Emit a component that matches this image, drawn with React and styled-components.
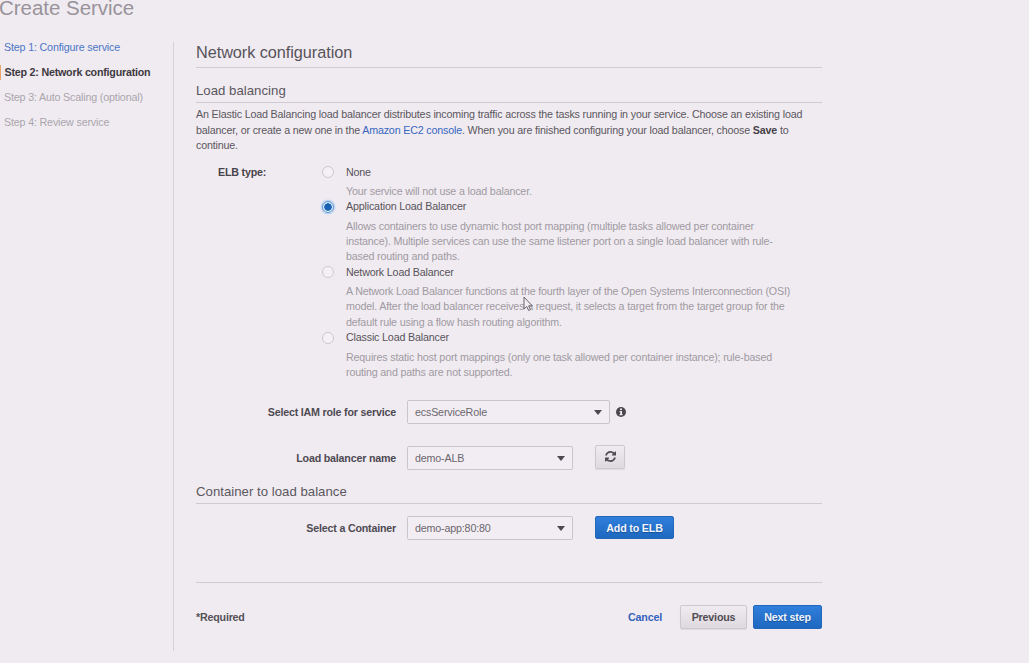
import React from "react";
import styled, { createGlobalStyle, css } from "styled-components";

const GlobalStyle = createGlobalStyle`
  * { box-sizing: border-box; }
  body {
    margin: 0;
    background: #f0ebf1;
    color: #5b575e;
    font-family: "Liberation Sans", Arial, sans-serif;
    font-size: 10.7px;
    letter-spacing: -0.165px;
    overflow: hidden;
  }
`;

const Page = styled.div`
  position: relative;
  width: 1029px;
  height: 663px;
  overflow: hidden;
`;

const PageTitle = styled.h1`
  margin: 0 0 0 -1px;
  height: 40px;
  font-size: 20.5px;
  font-weight: 400;
  letter-spacing: -0.03px;
  line-height: 16px;
  color: #98939a;
  white-space: nowrap;
`;

const Body = styled.div`
  display: flex;
  align-items: flex-start;
`;

const Steps = styled.nav`
  width: 173px;
  display: flex;
  flex-direction: column;
  gap: 10px;
`;

const stepColors = { link: "#4b76c6", current: "#3d393f", pending: "#aaa5ac" };

const Step = styled.div`
  height: 15px;
  line-height: 15px;
  padding-left: ${(p) => (p.$state === "current" ? 3.5 : 4)}px;
  border-left: ${(p) => (p.$state === "current" ? "1px solid #e8a768" : "0")};
  font-weight: ${(p) => (p.$state === "current" ? 700 : 400)};
  letter-spacing: ${(p) => (p.$state === "current" ? -0.21 : -0.16)}px;
  color: ${(p) => stepColors[p.$state]};
  white-space: nowrap;
`;

const Divider = styled.div`
  width: 1px;
  height: 609px;
  margin-top: 2px;
  background: #d6d1d8;
`;

const Main = styled.main`
  width: 626px;
  margin-left: 22px;
`;

const Heading = styled.h2`
  margin: 0;
  height: 28px;
  line-height: 24px;
  font-size: 16.3px;
  font-weight: 400;
  letter-spacing: -0.06px;
  color: #57535a;
  border-bottom: 1px solid #d0cbd2;
`;

const SubHeading = styled.h3`
  margin: ${(p) => p.$top}px 0 0;
  height: 22px;
  line-height: 20px;
  font-size: 13.2px;
  font-weight: 400;
  letter-spacing: 0.02px;
  color: #5b575e;
  border-bottom: 1px solid #cfcad1;
`;

const Intro = styled.p`
  margin: 4px 0 0;
  line-height: 15.5px;
  white-space: nowrap;
`;

const Link = styled.a`
  color: #3767bf;
  text-decoration: none;
`;

const Strong = styled.strong`
  color: #454147;
`;

const ElbRow = styled.div`
  display: flex;
  margin-top: 10.5px;
  height: 227px;
`;

const ElbLabel = styled.div`
  width: 126px;
  padding-left: 22px;
  line-height: 16px;
  font-weight: 700;
  letter-spacing: -0.2px;
  color: #48444a;
`;

const Options = styled.div`
  display: flex;
  flex-direction: column;
  margin-top: 0.5px;
`;

const Option = styled.label`
  display: grid;
  grid-template-columns: 12px 1fr;
  column-gap: 12px;
`;

const Radio = styled.span`
  width: 12px;
  height: 12px;
  margin-top: 1.5px;
  border-radius: 50%;
  border: 1px solid #cdc8cf;
  background: #f4f0f5;
  ${(p) =>
    p.$checked &&
    css`
      border-color: #5e9bdb;
      background: radial-gradient(circle, #1b62b6 0 3.4px, #dce8f6 4.1px);
      box-shadow: 0 0 1.5px 1px #a5c9ee;
    `}
`;

const OptionText = styled.div`
  line-height: 14.8px;
  color: #57535a;
  white-space: nowrap;
`;

const Hint = styled.div`
  padding-top: 4.5px;
  line-height: 15.4px;
  color: #9f9aa1;
`;

const FieldRow = styled.div`
  display: flex;
  align-items: center;
  height: 24px;
  margin-top: ${(p) => p.$top}px;
`;

const FieldLabel = styled.div`
  width: 200px;
  margin-right: 11px;
  text-align: right;
  font-weight: 700;
  letter-spacing: -0.2px;
  color: #4e4a51;
`;

const Select = styled.div`
  display: flex;
  align-items: center;
  justify-content: space-between;
  width: ${(p) => p.$width}px;
  height: 24px;
  padding: 0 7px;
  border: 1px solid #cac5cc;
  border-radius: 2px;
  background: #f2edf3;
  color: #6b676e;
`;

const Caret = styled.span`
  border: 4px solid transparent;
  border-top: 5px solid #4c484f;
  border-bottom: 0;
`;

const buttonTones = {
  primary: css`
    border: 1px solid #2367bb;
    background: linear-gradient(#2f7fdc, #1e68bf);
    color: #f1f5fc;
    text-shadow: 0 1px 1px rgba(0, 30, 80, 0.4);
  `,
  plain: css`
    border: 1px solid #cdc8ce;
    background: linear-gradient(#efebf0, #ded9df);
    color: #504c53;
    box-shadow: 0 1px 1px rgba(90, 80, 90, 0.12);
  `,
};

const Button = styled.button`
  display: flex;
  align-items: center;
  justify-content: center;
  width: ${(p) => p.$width}px;
  height: ${(p) => p.$height || 24}px;
  margin: ${(p) => p.$margin || 0};
  padding: 0;
  border-radius: 2px;
  font-family: inherit;
  font-size: 10.7px;
  font-weight: 700;
  letter-spacing: -0.18px;
  white-space: nowrap;
  ${(p) => buttonTones[p.$tone]}
`;

const InfoIcon = styled.svg`
  margin-left: 6px;
`;

const Footer = styled.footer`
  display: flex;
  align-items: center;
  margin-top: 42px;
  height: 69px;
  border-top: 1px solid #d0cbd2;
`;

const Required = styled.span`
  flex: 1;
  font-weight: 700;
  letter-spacing: -0.2px;
  color: #545057;
`;

const Cancel = styled.a`
  margin-right: 18px;
  font-weight: 700;
  letter-spacing: -0.18px;
  color: #3463bd;
`;

const Pointer = styled.svg`
  position: absolute;
  left: 522px;
  top: 295px;
`;

const steps = [
  { text: "Step 1: Configure service", state: "link" },
  { text: "Step 2: Network configuration", state: "current" },
  { text: "Step 3: Auto Scaling (optional)", state: "pending" },
  { text: "Step 4: Review service", state: "pending" },
];

const options = [
  { name: "None", lines: ["Your service will not use a load balancer."] },
  {
    name: "Application Load Balancer",
    checked: true,
    lines: [
      "Allows containers to use dynamic host port mapping (multiple tasks allowed per container",
      "instance). Multiple services can use the same listener port on a single load balancer with rule-",
      "based routing and paths.",
    ],
  },
  {
    name: "Network Load Balancer",
    lines: [
      "A Network Load Balancer functions at the fourth layer of the Open Systems Interconnection (OSI)",
      "model. After the load balancer receives a request, it selects a target from the target group for the",
      "default rule using a flow hash routing algorithm.",
    ],
  },
  {
    name: "Classic Load Balancer",
    lines: [
      "Requires static host port mappings (only one task allowed per container instance); rule-based",
      "routing and paths are not supported.",
    ],
  },
];

function Dropdown({ width, children }) {
  return (
    <Select $width={width}>
      <span>{children}</span>
      <Caret />
    </Select>
  );
}

export default function App() {
  return (
    <Page>
      <GlobalStyle />
      <PageTitle>Create Service</PageTitle>
      <Body>
        <Steps>
          {steps.map((s) => (
            <Step key={s.text} $state={s.state}>{s.text}</Step>
          ))}
        </Steps>
        <Divider />
        <Main>
          <Heading>Network configuration</Heading>
          <SubHeading $top={13}>Load balancing</SubHeading>
          <Intro>
            An Elastic Load Balancing load balancer distributes incoming traffic across the tasks running in your service. Choose an existing load
            <br />
            balancer, or create a new one in the <Link>Amazon EC2 console</Link>. When you are finished configuring your load balancer, choose <Strong>Save</Strong> to
            <br />
            continue.
          </Intro>
          <ElbRow>
            <ElbLabel>ELB type:</ElbLabel>
            <Options>
              {options.map((o) => (
                <Option key={o.name}>
                  <Radio $checked={o.checked} />
                  <OptionText>
                    {o.name}
                    <Hint>
                      {o.lines.map((line) => (
                        <div key={line}>{line}</div>
                      ))}
                    </Hint>
                  </OptionText>
                </Option>
              ))}
            </Options>
          </ElbRow>
          <FieldRow $top={9}>
            <FieldLabel>Select IAM role for service</FieldLabel>
            <Dropdown width={203}>ecsServiceRole</Dropdown>
            <InfoIcon width="10" height="10" viewBox="0 0 10 10">
              <circle cx="5" cy="5" r="5" fill="#4b474e" />
              <path d="M4 1.6h2v1.5H4zM3.6 4H6v3.2h.6v1H3.5v-1h.7V5h-.6z" fill="#f0ebf1" />
            </InfoIcon>
          </FieldRow>
          <FieldRow $top={22}>
            <FieldLabel>Load balancer name</FieldLabel>
            <Dropdown width={166}>demo-ALB</Dropdown>
            <Button $tone="plain" $width={30} $margin="-3px 0 0 22px" aria-label="Refresh">
              <svg width="11" height="11" viewBox="0 0 1536 1536" fill="#504c53">
                <path d="M1511 928q0 5-1 7-64 268-268 434.500T764 1536q-146 0-282.500-55T238 1324l-129 129q-19 19-45 19t-45-19-19-45V960q0-26 19-45t45-19h448q26 0 45 19t19 45-19 45l-137 137q71 66 161 102t187 36q134 0 250-65t186-179q11-17 53-117 8-23 30-23h192q13 0 22.500 9.500t9.500 22.500zm25-800v448q0 26-19 45t-45 19h-448q-26 0-45-19t-19-45 19-45l138-138Q969 256 768 256q-134 0-250 65T332 500q-11 17-53 117-8 23-30 23H50q-13 0-22.500-9.500T18 608v-7q65-268 270-434.500T768 0q146 0 284 55.500T1297 212l130-129q19-19 45-19t45 19 19 45z" />
              </svg>
            </Button>
          </FieldRow>
          <SubHeading $top={12}>Container to load balance</SubHeading>
          <FieldRow $top={12}>
            <FieldLabel>Select a Container</FieldLabel>
            <Dropdown width={166}>demo-app:80:80</Dropdown>
            <Button $tone="primary" $width={79} $height={23} $margin="-1px 0 0 22px">Add to ELB</Button>
          </FieldRow>
          <Footer>
            <Required>*Required</Required>
            <Cancel>Cancel</Cancel>
            <Button $tone="plain" $width={67}>Previous</Button>
            <Button $tone="primary" $width={69} $margin="0 0 0 6px">Next step</Button>
          </Footer>
        </Main>
      </Body>
      <Pointer width="12" height="18" viewBox="0 0 12 18">
        <path d="M2 2v12l2.700-2.500 2 4 1.800-.9-1.900-3.800h3.600z" fill="#f3eef4" stroke="#68646b" strokeWidth="1" />
      </Pointer>
    </Page>
  );
}
